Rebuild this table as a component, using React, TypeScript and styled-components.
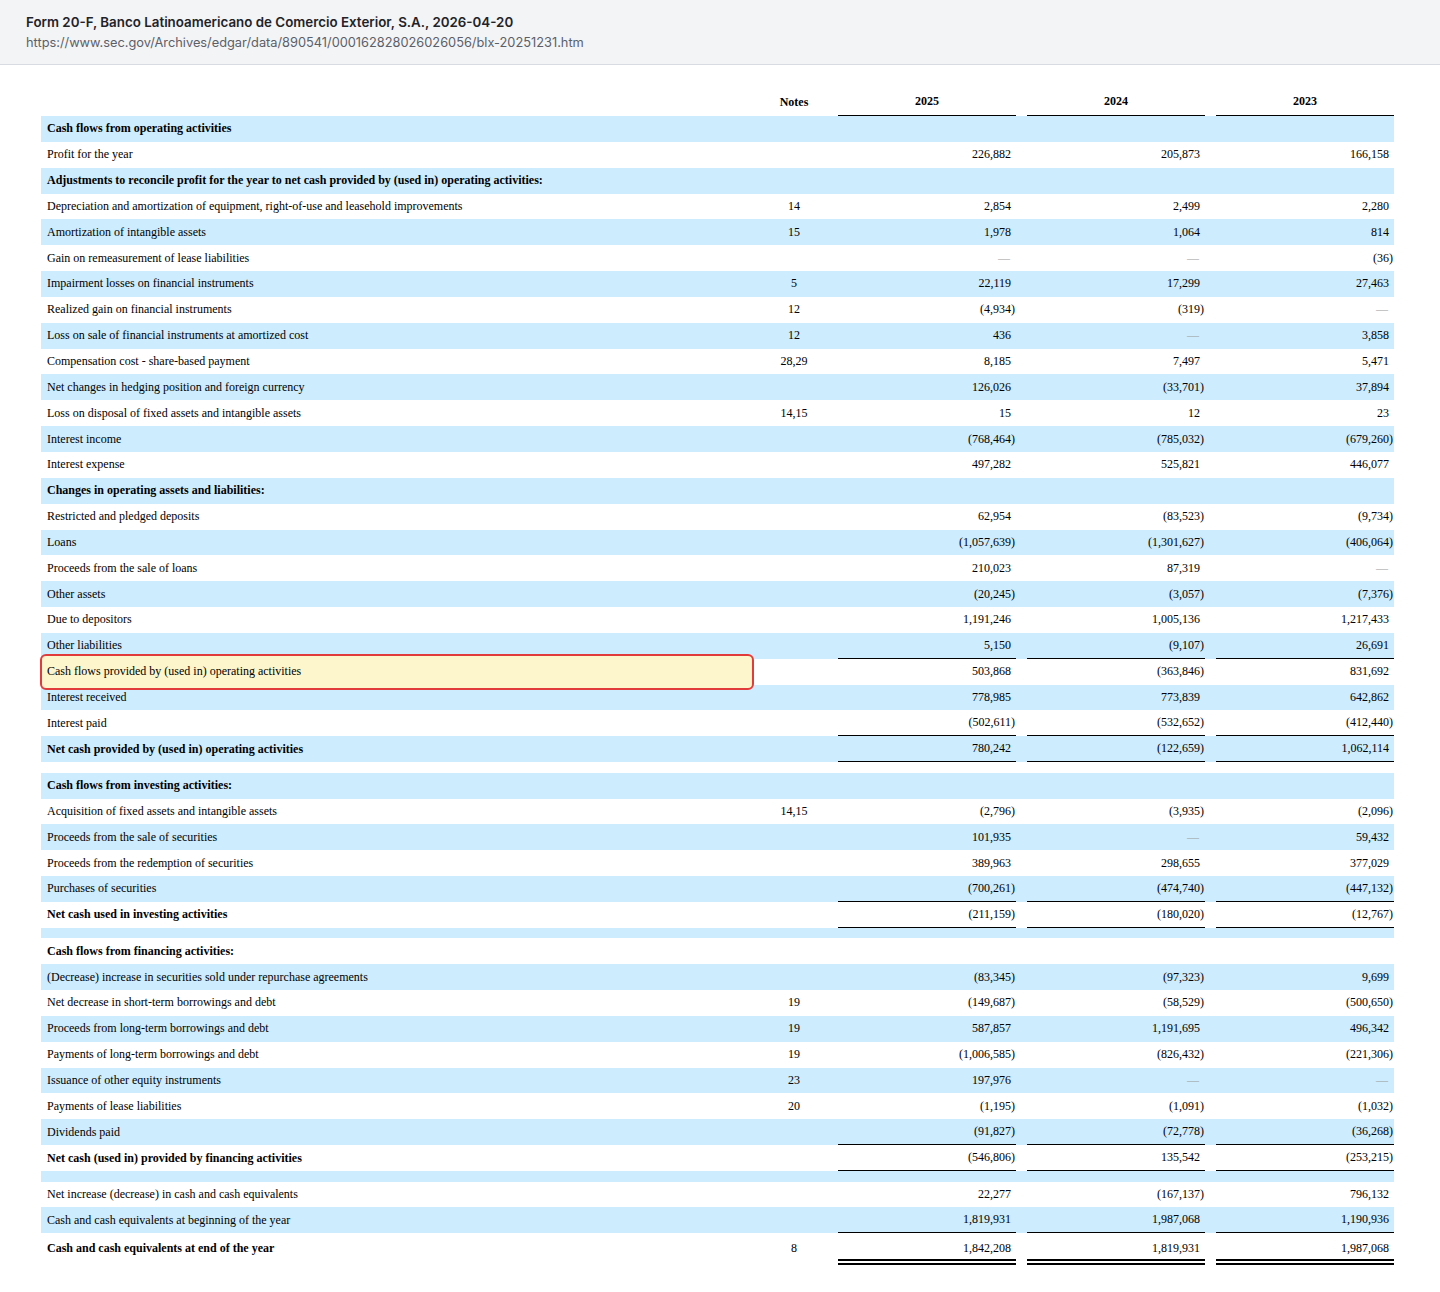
import React from 'react';
import styled, { createGlobalStyle } from 'styled-components';

const GlobalStyle = createGlobalStyle`
	html, body {
		margin: 0;
		padding: 0;
		background: #ffffff;
	}
	* {
		box-sizing: border-box;
	}
`;

type Rule = 'none' | 'single' | 'double';

interface RowData {
	label?: string;
	note?: string;
	values?: [string, string, string];
	bold?: boolean;
	spacer?: boolean;
	rule?: Rule;
	highlight?: boolean;
}

const rows: RowData[] = [
	{ label: 'Cash flows from operating activities', bold: true },
	{ label: 'Profit for the year', values: ['226,882', '205,873', '166,158'] },
	{ label: 'Adjustments to reconcile profit for the year to net cash provided by (used in) operating activities:', bold: true },
	{ label: 'Depreciation and amortization of equipment, right-of-use and leasehold improvements', note: '14', values: ['2,854', '2,499', '2,280'] },
	{ label: 'Amortization of intangible assets', note: '15', values: ['1,978', '1,064', '814'] },
	{ label: 'Gain on remeasurement of lease liabilities', values: ['—', '—', '(36)'] },
	{ label: 'Impairment losses on financial instruments', note: '5', values: ['22,119', '17,299', '27,463'] },
	{ label: 'Realized gain on financial instruments', note: '12', values: ['(4,934)', '(319)', '—'] },
	{ label: 'Loss on sale of financial instruments at amortized cost', note: '12', values: ['436', '—', '3,858'] },
	{ label: 'Compensation cost - share-based payment', note: '28,29', values: ['8,185', '7,497', '5,471'] },
	{ label: 'Net changes in hedging position and foreign currency', values: ['126,026', '(33,701)', '37,894'] },
	{ label: 'Loss on disposal of fixed assets and intangible assets', note: '14,15', values: ['15', '12', '23'] },
	{ label: 'Interest income', values: ['(768,464)', '(785,032)', '(679,260)'] },
	{ label: 'Interest expense', values: ['497,282', '525,821', '446,077'] },
	{ label: 'Changes in operating assets and liabilities:', bold: true },
	{ label: 'Restricted and pledged deposits', values: ['62,954', '(83,523)', '(9,734)'] },
	{ label: 'Loans', values: ['(1,057,639)', '(1,301,627)', '(406,064)'] },
	{ label: 'Proceeds from the sale of loans', values: ['210,023', '87,319', '—'] },
	{ label: 'Other assets', values: ['(20,245)', '(3,057)', '(7,376)'] },
	{ label: 'Due to depositors', values: ['1,191,246', '1,005,136', '1,217,433'] },
	{ label: 'Other liabilities', values: ['5,150', '(9,107)', '26,691'], rule: 'single' },
	{ label: 'Cash flows provided by (used in) operating activities', values: ['503,868', '(363,846)', '831,692'], highlight: true },
	{ label: 'Interest received', values: ['778,985', '773,839', '642,862'] },
	{ label: 'Interest paid', values: ['(502,611)', '(532,652)', '(412,440)'], rule: 'single' },
	{ label: 'Net cash provided by (used in) operating activities', bold: true, values: ['780,242', '(122,659)', '1,062,114'], rule: 'single' },
	{ spacer: true },
	{ label: 'Cash flows from investing activities:', bold: true },
	{ label: 'Acquisition of fixed assets and intangible assets', note: '14,15', values: ['(2,796)', '(3,935)', '(2,096)'] },
	{ label: 'Proceeds from the sale of securities', values: ['101,935', '—', '59,432'] },
	{ label: 'Proceeds from the redemption of securities', values: ['389,963', '298,655', '377,029'] },
	{ label: 'Purchases of securities', values: ['(700,261)', '(474,740)', '(447,132)'], rule: 'single' },
	{ label: 'Net cash used in investing activities', bold: true, values: ['(211,159)', '(180,020)', '(12,767)'], rule: 'single' },
	{ spacer: true },
	{ label: 'Cash flows from financing activities:', bold: true },
	{ label: '(Decrease) increase in securities sold under repurchase agreements', values: ['(83,345)', '(97,323)', '9,699'] },
	{ label: 'Net decrease in short-term borrowings and debt', note: '19', values: ['(149,687)', '(58,529)', '(500,650)'] },
	{ label: 'Proceeds from long-term borrowings and debt', note: '19', values: ['587,857', '1,191,695', '496,342'] },
	{ label: 'Payments of long-term borrowings and debt', note: '19', values: ['(1,006,585)', '(826,432)', '(221,306)'] },
	{ label: 'Issuance of other equity instruments', note: '23', values: ['197,976', '—', '—'] },
	{ label: 'Payments of lease liabilities', note: '20', values: ['(1,195)', '(1,091)', '(1,032)'] },
	{ label: 'Dividends paid', values: ['(91,827)', '(72,778)', '(36,268)'], rule: 'single' },
	{ label: 'Net cash (used in) provided by financing activities', bold: true, values: ['(546,806)', '135,542', '(253,215)'], rule: 'single' },
	{ spacer: true },
	{ label: 'Net increase (decrease) in cash and cash equivalents', values: ['22,277', '(167,137)', '796,132'] },
	{ label: 'Cash and cash equivalents at beginning of the year', values: ['1,819,931', '1,987,068', '1,190,936'], rule: 'single' },
	{ label: 'Cash and cash equivalents at end of the year', bold: true, note: '8', values: ['1,842,208', '1,819,931', '1,987,068'], rule: 'double' },
];

const Page = styled.div`
	width: 1440px;
	min-height: 1292px;
	background: #ffffff;
`;

const TopBar = styled.header`
	height: 65px;
	background: #f3f4f6;
	border-bottom: 1px solid #d8dce2;
	padding: 13px 26px 0;
	font-family: Inter, 'Liberation Sans', sans-serif;
`;

const Title = styled.div`
	font-size: 13.35px;
	font-weight: 600;
	color: #1f2328;
	line-height: 18px;
`;

const Url = styled.div`
	margin-top: 3px;
	font-size: 12.8px;
	color: #5b6068;
	line-height: 18px;
`;

const Sheet = styled.main`
	padding: 24px 46px 30px 41px;
	font-family: 'Liberation Serif', 'Times New Roman', serif;
	font-size: 12px;
	color: #000000;
`;

const Grid = styled.div`
	display: grid;
	grid-template-columns: 709px 66px 178px 178px 178px;
	column-gap: 11px;
`;

const HeadRow = styled(Grid)`
	height: 27px;
	align-items: end;
`;

const HeadCell = styled.div<{ $year?: boolean }>`
	font-weight: bold;
	text-align: center;
	padding-bottom: 6px;
	border-bottom: ${(p) => (p.$year ? '1.5px solid #000' : 'none')};
`;

const Body = styled.div`
	display: flex;
	flex-direction: column;

	& > :nth-child(odd) {
		background: #cdecfd;
	}
`;

const Row = styled(Grid)<{ $spacer?: boolean; $bold?: boolean; $final?: boolean }>`
	height: ${(p) => (p.$spacer ? '10.6px' : '25.85px')};
	padding-top: ${(p) => (p.$final ? '4px' : '0')};
	align-items: stretch;
	font-weight: ${(p) => (p.$bold ? 'bold' : 'normal')};
`;

const LabelCell = styled.div`
	position: relative;
	display: flex;
	align-items: center;
	padding-left: 6px;
	white-space: nowrap;
`;

const LabelText = styled.span`
	position: relative;
`;

const Highlight = styled.div`
	position: absolute;
	left: -1px;
	right: -4px;
	top: -5px;
	bottom: -5px;
	background: #fdf6cc;
	border: 2.5px solid #e23b3b;
	border-radius: 6px;
`;

const NoteCell = styled.div`
	display: flex;
	align-items: center;
	justify-content: center;
	font-weight: normal;
`;

const ValueCell = styled.div<{ $rule?: Rule }>`
	display: flex;
	align-items: center;
	justify-content: flex-end;
	padding-right: 1px;
	font-weight: normal;
	border-bottom: ${(p) =>
		p.$rule === 'single'
			? '1.5px solid #000'
			: p.$rule === 'double'
			? '6px double #000'
			: 'none'};
	margin-bottom: ${(p) => (p.$rule === 'double' ? '-6px' : '0')};
`;

const Paren = styled.span`
	display: inline-block;
	width: 4px;
	text-align: left;
`;

const Dash = styled.span`
	color: #999999;
	margin-right: 1px;
`;

const Value: React.FC<{ text: string }> = ({ text }) => {
	if (text === '—') {
		return (
			<>
				<Dash>—</Dash>
				<Paren />
			</>
		);
	}
	const neg = text.endsWith(')');
	return (
		<>
			<span>{neg ? text.slice(0, -1) : text}</span>
			<Paren>{neg ? ')' : ''}</Paren>
		</>
	);
};

const App: React.FC = () => {
	return (
		<Page>
			<GlobalStyle />
			<TopBar>
				<Title>Form 20-F, Banco Latinoamericano de Comercio Exterior, S.A., 2026-04-20</Title>
				<Url>https://www.sec.gov/Archives/edgar/data/890541/000162828026026056/blx-20251231.htm</Url>
			</TopBar>
			<Sheet>
				<HeadRow>
					<HeadCell />
					<HeadCell>Notes</HeadCell>
					<HeadCell $year>2025</HeadCell>
					<HeadCell $year>2024</HeadCell>
					<HeadCell $year>2023</HeadCell>
				</HeadRow>
				<Body>
					{rows.map((row, i) =>
						row.spacer ? (
							<Row key={i} $spacer />
						) : (
							<Row key={i} $bold={row.bold} $final={row.rule === 'double'}>
								<LabelCell>
									{row.highlight && <Highlight />}
									<LabelText>{row.label}</LabelText>
								</LabelCell>
								<NoteCell>{row.note}</NoteCell>
								{[0, 1, 2].map((c) => (
									<ValueCell key={c} $rule={row.rule}>
										{row.values && <Value text={row.values[c]} />}
									</ValueCell>
								))}
							</Row>
						)
					)}
				</Body>
			</Sheet>
		</Page>
	);
};

export default App;
